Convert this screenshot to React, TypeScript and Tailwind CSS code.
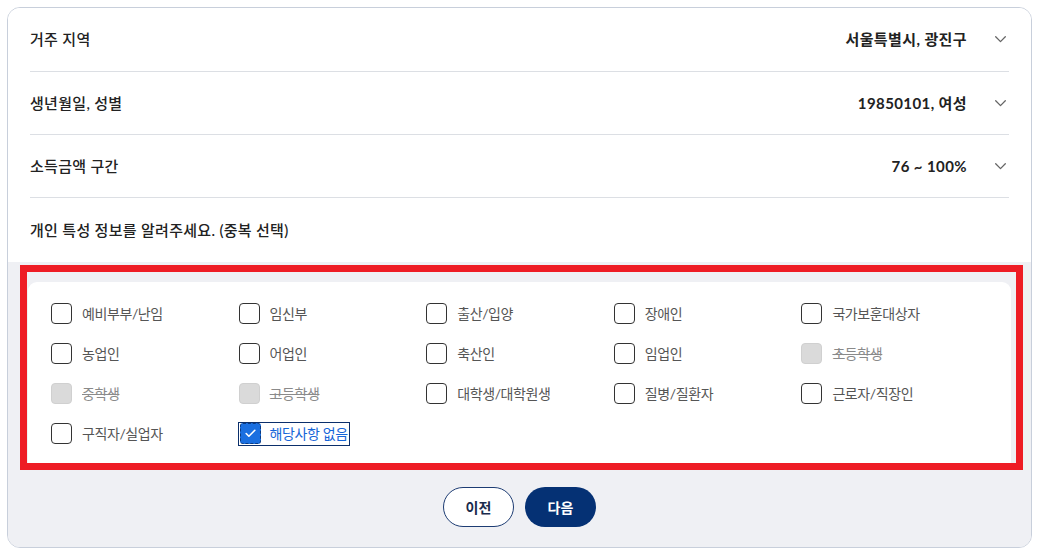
import { Check } from 'lucide-react';

type Item = { label: string; state?: 'disabled' | 'checked' };

const infoRows = [
  { label: '거주 지역', value: '서울특별시, 광진구' },
  { label: '생년월일, 성별', value: '19850101, 여성' },
  { label: '소득금액 구간', value: '76 ~ 100%' },
];

const items: Item[] = [
  { label: '예비부부/난임' },
  { label: '임신부' },
  { label: '출산/입양' },
  { label: '장애인' },
  { label: '국가보훈대상자' },
  { label: '농업인' },
  { label: '어업인' },
  { label: '축산인' },
  { label: '임업인' },
  { label: '초등학생', state: 'disabled' },
  { label: '중학생', state: 'disabled' },
  { label: '고등학생', state: 'disabled' },
  { label: '대학생/대학원생' },
  { label: '질병/질환자' },
  { label: '근로자/직장인' },
  { label: '구직자/실업자' },
  { label: '해당사항 없음', state: 'checked' },
];

function Chevron() {
  return (
    <svg width="11" height="7" viewBox="0 0 11 7" fill="none" className="ml-[28px] mr-[3px]">
      <path d="M0.7 0.8 L5.5 5.6 L10.3 0.8" stroke="#666" strokeWidth="1.3" strokeLinecap="round" strokeLinejoin="round" />
    </svg>
  );
}

function CheckItem({ item }: { item: Item }) {
  if (item.state === 'checked') {
    return (
      <div className="flex items-center h-[21px]">
        <div className="flex items-center h-[24px] -ml-[1px] pl-[1px] pr-[1px] border border-[#0b2f6b]">
          <span className="flex items-center justify-center w-[21px] h-[21px] rounded-[3px] bg-[#1a6fe0] border border-dashed border-[#0b3a80]">
            <Check size={13} strokeWidth={3} color="#ffffff" />
          </span>
          <span className="ml-[9px] text-[14px] tracking-[-0.4px] text-[#1565d8] leading-none">{item.label}</span>
        </div>
      </div>
    );
  }
  const disabled = item.state === 'disabled';
  return (
    <div className="flex items-center h-[21px]">
      <span
        className={
          disabled
            ? 'w-[21px] h-[21px] rounded-[4px] bg-[#dadada] border border-[#d0d0d0]'
            : 'w-[21px] h-[21px] rounded-[4px] bg-white border-[1.5px] border-[#333]'
        }
      />
      <span
        className={
          disabled
            ? 'ml-[10px] text-[14px] tracking-[-0.4px] text-[#8a8a8a] line-through leading-none'
            : 'ml-[10px] text-[14px] tracking-[-0.4px] text-[#555] leading-none'
        }
      >
        {item.label}
      </span>
    </div>
  );
}

export default function App() {
  return (
    <div className="w-[1039px] h-[557px] bg-white pt-[7px] px-[7px] font-[Lato,'Noto_Sans_CJK_KR',sans-serif]">
      <div className="h-[541px] rounded-[13px] border border-[#c8cfdb] overflow-hidden flex flex-col">
        {/* Info rows */}
        <div className="bg-white px-[22px]">
          {infoRows.map((row, i) => (
            <div
              key={row.label}
              className={`flex items-center justify-between border-b border-[#dcdfe4] ${i === 0 ? 'h-[64px]' : 'h-[63px]'}`}
            >
              <span className="text-[15px] font-medium tracking-[0.3px] text-[#222]">{row.label}</span>
              <div className="flex items-center">
                <span className="text-[15px] font-bold tracking-[0.4px] text-[#222]">{row.value}</span>
                <Chevron />
              </div>
            </div>
          ))}
          <div className="flex items-center h-[64px]">
            <span className="text-[15px] font-medium tracking-[0.3px] text-[#222]">개인 특성 정보를 알려주세요. (중복 선택)</span>
          </div>
        </div>

        {/* Characteristics */}
        <div className="flex-1 bg-[#eff0f4] pt-[3px] pl-[12px] pr-[8px]">
          <div className="border-[7px] border-[#ee1c25] pt-[10px] pl-[1px] pr-[5px]">
            <div className="h-[181px] bg-white rounded-t-[9px] pt-[21px] pl-[23px] pr-[22px]">
              <div className="grid grid-cols-5 gap-y-[19px]">
                {items.map(item => (
                  <CheckItem key={item.label} item={item} />
                ))}
              </div>
            </div>
          </div>

          <div className="flex justify-center gap-[11px] mt-[17px] -ml-[12px] -mr-[8px]">
            <button
              type="button"
              className="w-[71px] h-[40px] rounded-full bg-white border border-[#1d3c73] text-[14px] font-bold text-[#1a2b4c]"
            >
              이전
            </button>
            <button
              type="button"
              className="w-[71px] h-[40px] rounded-full bg-[#053174] text-[14px] font-bold text-white"
            >
              다음
            </button>
          </div>
        </div>
      </div>
    </div>
  );
}
